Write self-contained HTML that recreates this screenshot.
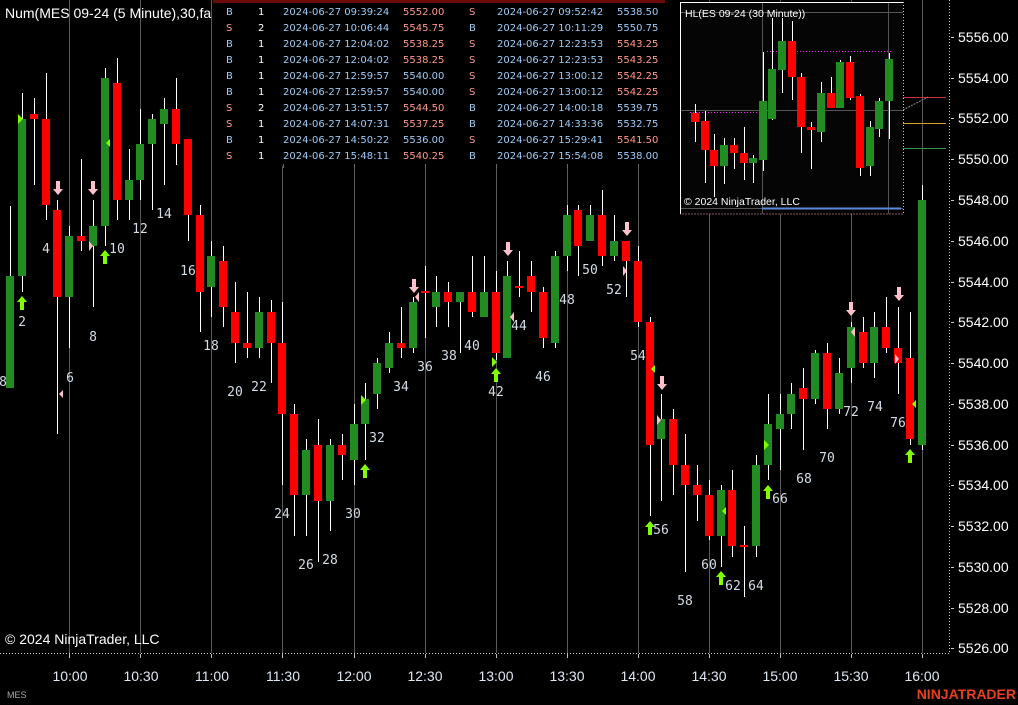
<!DOCTYPE html>
<html><head><meta charset="utf-8"><style>
html,body{margin:0;padding:0;background:#000;}
body{width:1018px;height:705px;overflow:hidden;position:relative;font-family:"Liberation Sans",sans-serif;}
svg{position:absolute;left:0;top:0;}
.lb{font-family:"DejaVu Sans Mono","Liberation Mono",monospace;font-size:13px;fill:#d4dce6;text-anchor:middle;}
.ax{font-size:14px;fill:#fff;}
.tm{font-size:14px;fill:#dfe8f5;text-anchor:middle;}
.tb{font-family:"DejaVu Sans","Liberation Sans",sans-serif;font-size:10px;}
.b{fill:#9ecbf5}.s{fill:#ff9a88}.w{fill:#fff}
</style></head><body>
<svg width="1018" height="705" viewBox="0 0 1018 705">
<g stroke="#5a5a5a" stroke-width="1">
<line x1="69.5" y1="0" x2="69.5" y2="653"/><line x1="140.5" y1="0" x2="140.5" y2="653"/><line x1="211.5" y1="0" x2="211.5" y2="653"/><line x1="282.5" y1="0" x2="282.5" y2="653"/><line x1="354.5" y1="0" x2="354.5" y2="653"/><line x1="425.5" y1="0" x2="425.5" y2="653"/><line x1="496.5" y1="0" x2="496.5" y2="653"/><line x1="567.5" y1="0" x2="567.5" y2="653"/><line x1="638.5" y1="0" x2="638.5" y2="653"/><line x1="709.5" y1="0" x2="709.5" y2="653"/><line x1="780.5" y1="0" x2="780.5" y2="653"/><line x1="851.5" y1="0" x2="851.5" y2="653"/><line x1="922.5" y1="0" x2="922.5" y2="653"/>
</g>
<line x1="0" y1="653.5" x2="949" y2="653.5" stroke="#ccc" stroke-dasharray="1,2"/>
<line x1="949.5" y1="0" x2="949.5" y2="653" stroke="#ccc" stroke-dasharray="1,2"/>
<g stroke="#bbb"><line x1="69.5" y1="654" x2="69.5" y2="658"/><line x1="140.5" y1="654" x2="140.5" y2="658"/><line x1="211.5" y1="654" x2="211.5" y2="658"/><line x1="282.5" y1="654" x2="282.5" y2="658"/><line x1="354.5" y1="654" x2="354.5" y2="658"/><line x1="425.5" y1="654" x2="425.5" y2="658"/><line x1="496.5" y1="654" x2="496.5" y2="658"/><line x1="567.5" y1="654" x2="567.5" y2="658"/><line x1="638.5" y1="654" x2="638.5" y2="658"/><line x1="709.5" y1="654" x2="709.5" y2="658"/><line x1="780.5" y1="654" x2="780.5" y2="658"/><line x1="851.5" y1="654" x2="851.5" y2="658"/><line x1="922.5" y1="654" x2="922.5" y2="658"/></g>
<g stroke="#fff" stroke-width="1">
<line x1="10.5" y1="206" x2="10.5" y2="388"/><line x1="22.5" y1="93" x2="22.5" y2="292"/><line x1="34.5" y1="98" x2="34.5" y2="185"/><line x1="46.5" y1="73" x2="46.5" y2="220"/><line x1="57.5" y1="200" x2="57.5" y2="434"/><line x1="69.5" y1="226" x2="69.5" y2="348"/><line x1="81.5" y1="159" x2="81.5" y2="251"/><line x1="93.5" y1="200" x2="93.5" y2="307"/><line x1="105.5" y1="68" x2="105.5" y2="246"/><line x1="117.5" y1="58" x2="117.5" y2="220"/><line x1="129.5" y1="149" x2="129.5" y2="220"/><line x1="140.5" y1="109" x2="140.5" y2="200"/><line x1="152.5" y1="114" x2="152.5" y2="210"/><line x1="164.5" y1="98" x2="164.5" y2="185"/><line x1="176.5" y1="78" x2="176.5" y2="165"/><line x1="188.5" y1="139" x2="188.5" y2="241"/><line x1="200.5" y1="205" x2="200.5" y2="332"/><line x1="211.5" y1="241" x2="211.5" y2="317"/><line x1="223.5" y1="246" x2="223.5" y2="327"/><line x1="235.5" y1="282" x2="235.5" y2="363"/><line x1="247.5" y1="292" x2="247.5" y2="358"/><line x1="259.5" y1="297" x2="259.5" y2="358"/><line x1="271.5" y1="300" x2="271.5" y2="383"/><line x1="282.5" y1="302" x2="282.5" y2="485"/><line x1="294.5" y1="404" x2="294.5" y2="536"/><line x1="306.5" y1="439" x2="306.5" y2="536"/><line x1="318.5" y1="419" x2="318.5" y2="562"/><line x1="330.5" y1="439" x2="330.5" y2="531"/><line x1="342.5" y1="434" x2="342.5" y2="480"/><line x1="354.5" y1="404" x2="354.5" y2="485"/><line x1="365.5" y1="383" x2="365.5" y2="460"/><line x1="377.5" y1="358" x2="377.5" y2="409"/><line x1="389.5" y1="332" x2="389.5" y2="373"/><line x1="401.5" y1="307" x2="401.5" y2="358"/><line x1="413.5" y1="297" x2="413.5" y2="353"/><line x1="425.5" y1="266" x2="425.5" y2="338"/><line x1="436.5" y1="276" x2="436.5" y2="327"/><line x1="448.5" y1="282" x2="448.5" y2="327"/><line x1="460.5" y1="292" x2="460.5" y2="353"/><line x1="472.5" y1="256" x2="472.5" y2="317"/><line x1="484.5" y1="256" x2="484.5" y2="317"/><line x1="496.5" y1="271" x2="496.5" y2="360"/><line x1="507.5" y1="261" x2="507.5" y2="358"/><line x1="519.5" y1="251" x2="519.5" y2="297"/><line x1="531.5" y1="261" x2="531.5" y2="312"/><line x1="543.5" y1="287" x2="543.5" y2="348"/><line x1="555.5" y1="251" x2="555.5" y2="348"/><line x1="567.5" y1="205" x2="567.5" y2="271"/><line x1="578.5" y1="205" x2="578.5" y2="276"/><line x1="590.5" y1="205" x2="590.5" y2="241"/><line x1="602.5" y1="190" x2="602.5" y2="266"/><line x1="614.5" y1="215" x2="614.5" y2="261"/><line x1="626.5" y1="241" x2="626.5" y2="297"/><line x1="638.5" y1="246" x2="638.5" y2="327"/><line x1="650.5" y1="317" x2="650.5" y2="516"/><line x1="661.5" y1="394" x2="661.5" y2="501"/><line x1="673.5" y1="409" x2="673.5" y2="495"/><line x1="685.5" y1="434" x2="685.5" y2="572"/><line x1="697.5" y1="465" x2="697.5" y2="521"/><line x1="709.5" y1="480" x2="709.5" y2="540"/><line x1="721.5" y1="485" x2="721.5" y2="567"/><line x1="732.5" y1="470" x2="732.5" y2="557"/><line x1="744.5" y1="526" x2="744.5" y2="597"/><line x1="756.5" y1="455" x2="756.5" y2="557"/><line x1="768.5" y1="394" x2="768.5" y2="480"/><line x1="780.5" y1="394" x2="780.5" y2="470"/><line x1="791.5" y1="383" x2="791.5" y2="429"/><line x1="803.5" y1="368" x2="803.5" y2="450"/><line x1="815.5" y1="350" x2="815.5" y2="404"/><line x1="827.5" y1="343" x2="827.5" y2="429"/><line x1="839.5" y1="358" x2="839.5" y2="414"/><line x1="851.5" y1="322" x2="851.5" y2="383"/><line x1="863.5" y1="317" x2="863.5" y2="368"/><line x1="874.5" y1="312" x2="874.5" y2="378"/><line x1="886.5" y1="297" x2="886.5" y2="353"/><line x1="898.5" y1="307" x2="898.5" y2="394"/><line x1="910.5" y1="312" x2="910.5" y2="445"/><line x1="922.5" y1="185" x2="922.5" y2="450"/>
</g>
<g fill="#228b22">
<rect x="6" y="276" width="8" height="112"/><rect x="18" y="119" width="8" height="157"/><rect x="65" y="236" width="8" height="61"/><rect x="89" y="226" width="8" height="20"/><rect x="101" y="78" width="8" height="148"/><rect x="125" y="180" width="8" height="20"/><rect x="136" y="144" width="8" height="36"/><rect x="148" y="119" width="8" height="25"/><rect x="160" y="109" width="8" height="15"/><rect x="207" y="256" width="8" height="31"/><rect x="255" y="312" width="8" height="36"/><rect x="302" y="450" width="8" height="45"/><rect x="326" y="445" width="8" height="56"/><rect x="350" y="424" width="8" height="36"/><rect x="361" y="399" width="8" height="25"/><rect x="373" y="363" width="8" height="31"/><rect x="385" y="343" width="8" height="25"/><rect x="409" y="302" width="8" height="46"/><rect x="432" y="292" width="8" height="15"/><rect x="456" y="292" width="8" height="10"/><rect x="480" y="292" width="8" height="25"/><rect x="503" y="276" width="8" height="82"/><rect x="551" y="256" width="8" height="87"/><rect x="563" y="215" width="8" height="41"/><rect x="586" y="215" width="8" height="26"/><rect x="610" y="241" width="8" height="15"/><rect x="657" y="419" width="8" height="20"/><rect x="717" y="490" width="8" height="46"/><rect x="752" y="465" width="8" height="81"/><rect x="764" y="424" width="8" height="41"/><rect x="776" y="414" width="8" height="15"/><rect x="787" y="394" width="8" height="20"/><rect x="811" y="353" width="8" height="46"/><rect x="835" y="373" width="8" height="36"/><rect x="847" y="327" width="8" height="41"/><rect x="870" y="327" width="8" height="36"/><rect x="918" y="200" width="8" height="245"/>
</g>
<g fill="#ff0000">
<rect x="30" y="114" width="8" height="5"/><rect x="42" y="119" width="8" height="86"/><rect x="53" y="210" width="8" height="87"/><rect x="77" y="236" width="8" height="5"/><rect x="113" y="83" width="8" height="117"/><rect x="172" y="109" width="8" height="35"/><rect x="184" y="139" width="8" height="76"/><rect x="196" y="215" width="8" height="77"/><rect x="219" y="261" width="8" height="46"/><rect x="231" y="312" width="8" height="31"/><rect x="243" y="343" width="8" height="5"/><rect x="267" y="312" width="8" height="31"/><rect x="278" y="343" width="8" height="71"/><rect x="290" y="414" width="8" height="81"/><rect x="314" y="445" width="8" height="56"/><rect x="338" y="445" width="8" height="10"/><rect x="397" y="343" width="8" height="5"/><rect x="421" y="291" width="8" height="2"/><rect x="444" y="292" width="8" height="10"/><rect x="468" y="292" width="8" height="20"/><rect x="492" y="292" width="8" height="61"/><rect x="515" y="286" width="8" height="2"/><rect x="527" y="276" width="8" height="16"/><rect x="539" y="292" width="8" height="46"/><rect x="574" y="210" width="8" height="36"/><rect x="598" y="215" width="8" height="41"/><rect x="622" y="241" width="8" height="20"/><rect x="634" y="261" width="8" height="61"/><rect x="646" y="322" width="8" height="123"/><rect x="669" y="419" width="8" height="46"/><rect x="681" y="465" width="8" height="20"/><rect x="693" y="485" width="8" height="10"/><rect x="705" y="495" width="8" height="41"/><rect x="728" y="490" width="8" height="56"/><rect x="740" y="545" width="8" height="2"/><rect x="799" y="388" width="8" height="11"/><rect x="823" y="353" width="8" height="56"/><rect x="859" y="332" width="8" height="31"/><rect x="882" y="327" width="8" height="21"/><rect x="894" y="348" width="8" height="15"/><rect x="906" y="358" width="8" height="81"/>
</g>
<g fill="#7fff00">
<path d="M22 296 l-5 6 h3 v8 h4 v-8 h3 z"/>
<path d="M105 250 l-5 6 h3 v8 h4 v-8 h3 z"/><path d="M365 464 l-5 6 h3 v8 h4 v-8 h3 z"/><path d="M496 368 l-5 6 h3 v8 h4 v-8 h3 z"/><path d="M650 521 l-5 6 h3 v8 h4 v-8 h3 z"/><path d="M721 571 l-5 6 h3 v8 h4 v-8 h3 z"/><path d="M768 485 l-5 6 h3 v8 h4 v-8 h3 z"/><path d="M910 449 l-5 6 h3 v8 h4 v-8 h3 z"/>
<path d="M18 114 l5 5 l-5 5 z"/><path d="M110 139 l-4 4 l4 4 z"/><path d="M361 395 l5 5 l-5 5 z"/><path d="M492 357 l5 5 l-5 5 z"/><path d="M655 365 l-4 4 l4 4 z"/><path d="M726 507 l-4 4 l4 4 z"/><path d="M764 440 l5 5 l-5 5 z"/><path d="M916 400 l-4 4 l4 4 z"/>
</g>
<g fill="#ffc0cb">
<path d="M58 195 l-5 -6 h3 v-8 h4 v8 h3 z"/><path d="M93 195 l-5 -6 h3 v-8 h4 v8 h3 z"/><path d="M414 293 l-5 -6 h3 v-8 h4 v8 h3 z"/><path d="M508 256 l-5 -6 h3 v-8 h4 v8 h3 z"/><path d="M627 236 l-5 -6 h3 v-8 h4 v8 h3 z"/><path d="M662 390 l-5 -6 h3 v-8 h4 v8 h3 z"/><path d="M851 316 l-5 -6 h3 v-8 h4 v8 h3 z"/><path d="M899 301 l-5 -6 h3 v-8 h4 v8 h3 z"/>
<path d="M63 390 l-4 4 l4 4 z"/><path d="M89 241 l4 5 l-4 5 z"/><path d="M419 292 l-4 5 l4 5 z"/><path d="M514 312 l-4 5 l4 5 z"/><path d="M623 266 l4 5 l-4 5 z"/><path d="M657 415 l4 5 l-4 5 z"/><path d="M855 327 l-4 5 l4 5 z"/><path d="M895 354 l4 5 l-4 5 z"/>
</g>
<g class="lb">
<text x="3" y="386">8</text><text x="22" y="326">2</text><text x="46" y="253">4</text><text x="70" y="382">6</text><text x="93" y="341">8</text><text x="117" y="253">10</text><text x="140" y="233">12</text><text x="164" y="218">14</text><text x="188" y="275">16</text><text x="211" y="350">18</text><text x="235" y="396">20</text><text x="259" y="391">22</text><text x="282" y="518">24</text><text x="306" y="569">26</text><text x="330" y="564">28</text><text x="353" y="518">30</text><text x="377" y="442">32</text><text x="401" y="391">34</text><text x="425" y="371">36</text><text x="449" y="360">38</text><text x="472" y="350">40</text><text x="496" y="396">42</text><text x="519" y="330">44</text><text x="543" y="381">46</text><text x="567" y="304">48</text><text x="590" y="274">50</text><text x="614" y="294">52</text><text x="638" y="360">54</text><text x="661" y="534">56</text><text x="685" y="605">58</text><text x="709" y="569">60</text><text x="733" y="590">62</text><text x="756" y="590">64</text><text x="780" y="503">66</text><text x="804" y="483">68</text><text x="827" y="462">70</text><text x="851" y="416">72</text><text x="875" y="411">74</text><text x="898" y="427">76</text>
</g>
<g class="ax">
<text x="958" y="42">5556.00</text><text x="958" y="83">5554.00</text><text x="958" y="123">5552.00</text><text x="958" y="164">5550.00</text><text x="958" y="205">5548.00</text><text x="958" y="246">5546.00</text><text x="958" y="287">5544.00</text><text x="958" y="327">5542.00</text><text x="958" y="368">5540.00</text><text x="958" y="409">5538.00</text><text x="958" y="450">5536.00</text><text x="958" y="490">5534.00</text><text x="958" y="531">5532.00</text><text x="958" y="572">5530.00</text><text x="958" y="613">5528.00</text><text x="958" y="653">5526.00</text>
</g>
<g stroke="#ccc"><line x1="951" y1="37.5" x2="954" y2="37.5"/><line x1="951" y1="78.5" x2="954" y2="78.5"/><line x1="951" y1="118.5" x2="954" y2="118.5"/><line x1="951" y1="159.5" x2="954" y2="159.5"/><line x1="951" y1="200.5" x2="954" y2="200.5"/><line x1="951" y1="241.5" x2="954" y2="241.5"/><line x1="951" y1="282.5" x2="954" y2="282.5"/><line x1="951" y1="322.5" x2="954" y2="322.5"/><line x1="951" y1="363.5" x2="954" y2="363.5"/><line x1="951" y1="404.5" x2="954" y2="404.5"/><line x1="951" y1="445.5" x2="954" y2="445.5"/><line x1="951" y1="485.5" x2="954" y2="485.5"/><line x1="951" y1="526.5" x2="954" y2="526.5"/><line x1="951" y1="567.5" x2="954" y2="567.5"/><line x1="951" y1="608.5" x2="954" y2="608.5"/><line x1="951" y1="648.5" x2="954" y2="648.5"/></g>
<g class="tm">
<text x="70" y="681">10:00</text><text x="141" y="681">10:30</text><text x="212" y="681">11:00</text><text x="283" y="681">11:30</text><text x="354" y="681">12:00</text><text x="425" y="681">12:30</text><text x="496" y="681">13:00</text><text x="567" y="681">13:30</text><text x="638" y="681">14:00</text><text x="709" y="681">14:30</text><text x="780" y="681">15:00</text><text x="851" y="681">15:30</text><text x="922" y="681">16:00</text>
</g>
<text x="5" y="644" fill="#fff" font-size="14">© 2024 NinjaTrader, LLC</text>
<text x="7" y="698" fill="#aaa" font-size="9">MES</text>
<text x="1016" y="699" fill="#e8401c" font-size="14" font-weight="bold" text-anchor="end">NINJATRADER</text>
<text x="5" y="18" fill="#fff" font-size="14">Num(MES 09-24 (5 Minute),30,fa</text>
<line x1="903" y1="97.5" x2="946" y2="97.5" stroke="#d0303c"/>
<line x1="903" y1="123.5" x2="946" y2="123.5" stroke="#d8a030"/>
<line x1="903" y1="148.5" x2="946" y2="148.5" stroke="#2a9a4a"/>
<line x1="903" y1="110" x2="928" y2="97" stroke="#888" stroke-dasharray="2,1"/>
<rect x="213" y="0" width="453" height="166" fill="#000"/>
<line x1="213" y1="1.5" x2="665" y2="1.5" stroke="#6a0a0a" stroke-width="3"/>
<g stroke="#666"><line x1="283.5" y1="164" x2="283.5" y2="168"/><line x1="354.5" y1="164" x2="354.5" y2="168"/><line x1="425.5" y1="164" x2="425.5" y2="168"/><line x1="496.5" y1="164" x2="496.5" y2="168"/><line x1="567.5" y1="164" x2="567.5" y2="168"/><line x1="638.5" y1="164" x2="638.5" y2="168"/></g>
<g class="tb">
<text x="226" y="15" class="b">B</text><text x="258" y="15" class="w">1</text><text x="283" y="15" class="b">2024-06-27 09:39:24</text><text x="403" y="15" class="s">5552.00</text><text x="469" y="15" class="s">S</text><text x="497" y="15" class="b">2024-06-27 09:52:42</text><text x="617" y="15" class="b">5538.50</text>
<text x="226" y="31" class="s">S</text><text x="258" y="31" class="w">2</text><text x="283" y="31" class="b">2024-06-27 10:06:44</text><text x="403" y="31" class="s">5545.75</text><text x="469" y="31" class="b">B</text><text x="497" y="31" class="b">2024-06-27 10:11:29</text><text x="617" y="31" class="b">5550.75</text>
<text x="226" y="47" class="b">B</text><text x="258" y="47" class="w">1</text><text x="283" y="47" class="b">2024-06-27 12:04:02</text><text x="403" y="47" class="s">5538.25</text><text x="469" y="47" class="s">S</text><text x="497" y="47" class="b">2024-06-27 12:23:53</text><text x="617" y="47" class="s">5543.25</text>
<text x="226" y="63" class="b">B</text><text x="258" y="63" class="w">1</text><text x="283" y="63" class="b">2024-06-27 12:04:02</text><text x="403" y="63" class="s">5538.25</text><text x="469" y="63" class="s">S</text><text x="497" y="63" class="b">2024-06-27 12:23:53</text><text x="617" y="63" class="s">5543.25</text>
<text x="226" y="79" class="b">B</text><text x="258" y="79" class="w">1</text><text x="283" y="79" class="b">2024-06-27 12:59:57</text><text x="403" y="79" class="b">5540.00</text><text x="469" y="79" class="s">S</text><text x="497" y="79" class="b">2024-06-27 13:00:12</text><text x="617" y="79" class="s">5542.25</text>
<text x="226" y="95" class="b">B</text><text x="258" y="95" class="w">1</text><text x="283" y="95" class="b">2024-06-27 12:59:57</text><text x="403" y="95" class="b">5540.00</text><text x="469" y="95" class="s">S</text><text x="497" y="95" class="b">2024-06-27 13:00:12</text><text x="617" y="95" class="s">5542.25</text>
<text x="226" y="111" class="s">S</text><text x="258" y="111" class="w">2</text><text x="283" y="111" class="b">2024-06-27 13:51:57</text><text x="403" y="111" class="s">5544.50</text><text x="469" y="111" class="b">B</text><text x="497" y="111" class="b">2024-06-27 14:00:18</text><text x="617" y="111" class="b">5539.75</text>
<text x="226" y="127" class="s">S</text><text x="258" y="127" class="w">1</text><text x="283" y="127" class="b">2024-06-27 14:07:31</text><text x="403" y="127" class="s">5537.25</text><text x="469" y="127" class="b">B</text><text x="497" y="127" class="b">2024-06-27 14:33:36</text><text x="617" y="127" class="b">5532.75</text>
<text x="226" y="143" class="b">B</text><text x="258" y="143" class="w">1</text><text x="283" y="143" class="b">2024-06-27 14:50:22</text><text x="403" y="143" class="b">5536.00</text><text x="469" y="143" class="s">S</text><text x="497" y="143" class="b">2024-06-27 15:29:41</text><text x="617" y="143" class="s">5541.50</text>
<text x="226" y="159" class="s">S</text><text x="258" y="159" class="w">1</text><text x="283" y="159" class="b">2024-06-27 15:48:11</text><text x="403" y="159" class="s">5540.25</text><text x="469" y="159" class="b">B</text><text x="497" y="159" class="b">2024-06-27 15:54:08</text><text x="617" y="159" class="b">5538.00</text>
</g>
<rect x="680" y="2" width="223" height="212" fill="#050505"/>
<g stroke="#555"><line x1="680" y1="12.5" x2="903" y2="12.5"/><line x1="680" y1="110.5" x2="903" y2="110.5"/><line x1="680" y1="208.5" x2="903" y2="208.5"/><line x1="762.5" y1="2" x2="762.5" y2="214"/><line x1="888.5" y1="2" x2="888.5" y2="214"/></g>
<line x1="762" y1="208.5" x2="901" y2="208.5" stroke="#5a8ae0" stroke-width="2"/>
<line x1="690" y1="112.5" x2="767" y2="112.5" stroke="#ff20ff" stroke-dasharray="1,2"/>
<line x1="767" y1="51.5" x2="893" y2="51.5" stroke="#ff20ff" stroke-dasharray="1,2"/>
<g stroke="#fff">
<line x1="695.5" y1="104" x2="695.5" y2="142"/><line x1="705.5" y1="111" x2="705.5" y2="183"/><line x1="714.5" y1="134" x2="714.5" y2="197"/><line x1="724.5" y1="138" x2="724.5" y2="184"/><line x1="734.5" y1="138" x2="734.5" y2="169"/><line x1="744.5" y1="127" x2="744.5" y2="180"/><line x1="753.5" y1="155" x2="753.5" y2="183"/><line x1="763.5" y1="52" x2="763.5" y2="171"/><line x1="772.5" y1="18" x2="772.5" y2="120"/><line x1="782.5" y1="18" x2="782.5" y2="93"/><line x1="792.5" y1="21" x2="792.5" y2="100"/><line x1="801.5" y1="73" x2="801.5" y2="153"/><line x1="811.5" y1="122" x2="811.5" y2="169"/><line x1="821.5" y1="82" x2="821.5" y2="142"/><line x1="831.5" y1="77" x2="831.5" y2="108"/><line x1="840.5" y1="60" x2="840.5" y2="108"/><line x1="850.5" y1="56" x2="850.5" y2="100"/><line x1="860.5" y1="94" x2="860.5" y2="176"/><line x1="870.5" y1="121" x2="870.5" y2="176"/><line x1="879.5" y1="98" x2="879.5" y2="137"/><line x1="889.5" y1="53" x2="889.5" y2="139"/>
</g>
<g fill="#ff0000"><rect x="691" y="113" width="8" height="9"/><rect x="701" y="121" width="8" height="29"/><rect x="710" y="150" width="8" height="16"/><rect x="730" y="145" width="8" height="8"/><rect x="740" y="153" width="8" height="10"/><rect x="788" y="41" width="8" height="36"/><rect x="797" y="77" width="8" height="50"/><rect x="807" y="127" width="8" height="3"/><rect x="827" y="93" width="8" height="15"/><rect x="846" y="62" width="8" height="36"/><rect x="856" y="96" width="8" height="72"/></g>
<g fill="#228b22"><rect x="720" y="145" width="8" height="21"/><rect x="749" y="158" width="8" height="5"/><rect x="759" y="101" width="8" height="59"/><rect x="768" y="69" width="8" height="50"/><rect x="778" y="41" width="8" height="29"/><rect x="817" y="93" width="8" height="39"/><rect x="836" y="62" width="8" height="46"/><rect x="866" y="127" width="8" height="39"/><rect x="875" y="101" width="8" height="28"/><rect x="885" y="59" width="8" height="42"/></g>
<path d="M680.5 214 V2.5 H903" fill="none" stroke="#fff"/>
<path d="M903.5 2 V214 H680" fill="none" stroke="#ffb0c0" stroke-dasharray="1,2"/>
<text x="685" y="17" fill="#fff" font-size="10.5">HL(ES 09-24 (30 Minute))</text>
<text x="684" y="205" fill="#fff" font-size="10.5">© 2024 NinjaTrader, LLC</text>
</svg>
</body></html>
